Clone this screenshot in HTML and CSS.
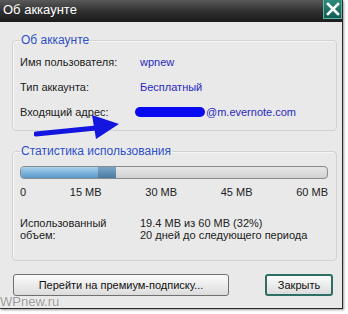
FILE: index.html
```html
<!DOCTYPE html>
<html lang="ru">
<head>
    <meta charset="UTF-8">
    <title>Об аккаунте</title>
    <link rel="stylesheet" href="styles.css">
</head>
<body>
    <div class="window">
        <!-- Title bar -->
        <div class="titlebar">
            <span class="title">Об аккаунте</span>
            <div class="close-x">
                <svg width="14" height="14" viewBox="0 0 14 14">
                    <path d="M2 2 L12 12 M12 2 L2 12" stroke="white" stroke-width="2.6" stroke-linecap="square"/>
                </svg>
            </div>
        </div>

        <div class="content">
            <!-- Account group -->
            <fieldset class="group">
                <legend>Об аккаунте</legend>
                <div class="row"><span class="label">Имя пользователя:</span><span class="value">wpnew</span></div>
                <div class="row"><span class="label">Тип аккаунта:</span><span class="value">Бесплатный</span></div>
                <div class="row"><span class="label">Входящий адрес:</span><span class="value mail"><span class="blot"></span>@m.evernote.com</span></div>
            </fieldset>

            <!-- Usage group -->
            <fieldset class="group usage">
                <legend>Статистика использования</legend>
                <div class="progress">
                    <div class="fill"></div>
                    <div class="fill-extra"></div>
                </div>
                <div class="ticks">
                    <span>0</span><span>15 MB</span><span>30 MB</span><span>45 MB</span><span>60 MB</span>
                </div>
                <div class="used">
                    <span class="label">Использованный<br>объем:</span>
                    <span class="value-dark">19.4 MB из 60 MB (32%)<br>20 дней до следующего периода</span>
                </div>
            </fieldset>

            <div class="buttons">
                <button class="btn premium">Перейти на премиум-подписку...</button>
                <button class="btn close">Закрыть</button>
            </div>
        </div>

        <!-- annotation arrow over the dialog -->
        <svg class="arrow" width="100" height="30" viewBox="0 0 100 30">
            <path d="M2 20 L62 14" stroke="#1515e0" stroke-width="5" stroke-linecap="round"/>
            <path d="M58 1 L85 10 L62 25 Z" fill="#1515e0"/>
        </svg>
    </div>
    <div class="watermark">WPnew.ru</div>
</body>
</html>
```

FILE: styles.css
```css
body {
    margin: 0;
    background-color: #ffffff;
    font-family: "Liberation Sans", Arial, sans-serif;
    font-size: 11px;
    color: #222222;
    position: relative;
    width: 348px;
    height: 314px;
    overflow: hidden;
}

.window {
    position: relative;
    width: 343px;
    height: 309px;
    background-color: #e9e9e9;
    border-right: 1px solid #2a2a2a;
    border-bottom: 1px solid #2a2a2a;
    box-shadow: 1px 1px 2px rgba(0, 0, 0, 0.4);
    box-sizing: border-box;
}

.titlebar {
    height: 22px;
    display: flex;
    justify-content: space-between;
    align-items: flex-start;
    background: linear-gradient(#5a5a5a, #2e2e2e 55%, #1c1c1c);
    padding-left: 3px;
}

.title {
    color: #ffffff;
    font-size: 13px;
    line-height: 20px;
}

.close-x {
    width: 17px;
    height: 18px;
    background: linear-gradient(#2e8a7c, #125c52);
    border: 1px solid #5fb7a8;
    border-top: none;
    display: flex;
    align-items: center;
    justify-content: center;
}

.content {
    padding: 11px 5px 0 12px;
}

.group {
    margin: 0;
    border: 1px solid #d2d2d2;
    border-radius: 4px;
    padding: 2px 8px 6px 7px;
    box-shadow: inset 1px 1px 0 #f6f6f6;
}

.group legend {
    color: #2f4fc8;
    font-size: 12px;
    padding: 0 1px;
}

.row {
    display: flex;
    height: 25px;
    align-items: center;
}

.label {
    width: 120px;
    flex-shrink: 0;
}

.value {
    color: #2828c0;
}

.mail {
    display: flex;
    align-items: center;
}

.blot {
    display: inline-block;
    width: 70px;
    height: 10px;
    border-radius: 5px;
    background-color: #0a0af0;
    margin-left: -5px;
    margin-right: 1px;
}

.usage {
    margin-top: 13px;
    padding: 8px 8px 19px 7px;
}

.progress {
    height: 13px;
    border: 1px solid #8a8a8a;
    border-radius: 4px;
    background: linear-gradient(#e6e6e6, #d2d2d2);
    box-sizing: border-box;
    display: flex;
    overflow: hidden;
}

.fill {
    width: 77px;
    background: linear-gradient(#a8d0ec, #7fb4dc 50%, #5a98c8);
}

.fill-extra {
    width: 18px;
    background: linear-gradient(#7aa4c4, #4a7ca4);
}

.ticks {
    display: flex;
    justify-content: space-between;
    margin-top: 6px;
    line-height: 14px;
}

.used {
    display: flex;
    margin-top: 18px;
    line-height: 12px;
}

.value-dark {
    color: #222222;
}

.buttons {
    display: flex;
    justify-content: space-between;
    margin-top: 13px;
    padding-right: 4px;
}

.btn {
    height: 22px;
    font-family: "Liberation Sans", Arial, sans-serif;
    font-size: 11px;
    color: #111111;
    border: 1px solid #707070;
    border-radius: 3px;
    background: linear-gradient(#fbfbfb, #ececec 50%, #dcdcdc);
    padding: 0;
}

.premium {
    width: 216px;
    margin-left: 1px;
}

.close {
    width: 68px;
    border: 2px solid #2e6e64;
}

.arrow {
    position: absolute;
    left: 34px;
    top: 114px;
}

.watermark {
    position: absolute;
    left: 0;
    top: 294px;
    font-size: 13px;
    color: #9a9a9a;
    text-shadow: 0 0 2px #ffffff;
}
```
